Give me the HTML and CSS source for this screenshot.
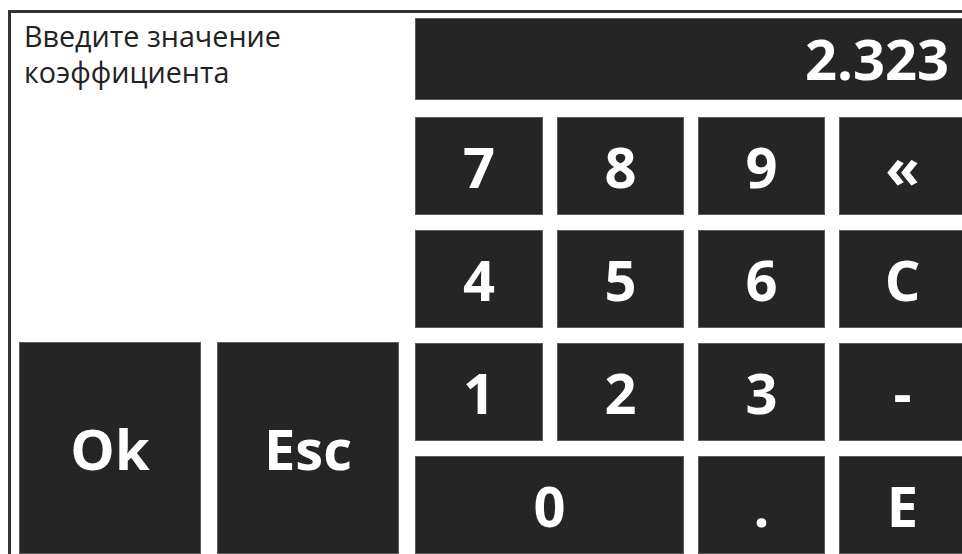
FILE: index.html
```html
<!DOCTYPE html>
<html lang="ru">
<head>
<meta charset="utf-8">
<title>Ввод коэффициента</title>
<link rel="stylesheet" href="styles.css">
</head>
<body>
<div class="frame">
  <div class="side">
    <p class="prompt">Введите значение<br>коэффициента</p>
    <div class="actions">
      <button class="key key-action">Ok</button>
      <button class="key key-action">Esc</button>
    </div>
  </div>
  <div class="entry">
    <div class="display">2.323</div>
    <div class="keypad">
      <button class="key">7</button>
      <button class="key">8</button>
      <button class="key">9</button>
      <button class="key">«</button>
      <button class="key">4</button>
      <button class="key">5</button>
      <button class="key">6</button>
      <button class="key">C</button>
      <button class="key">1</button>
      <button class="key">2</button>
      <button class="key">3</button>
      <button class="key">-</button>
      <button class="key key-wide">0</button>
      <button class="key">.</button>
      <button class="key">E</button>
    </div>
  </div>
</div>
</body>
</html>
```

FILE: styles.css
```css
html, body {
  margin: 0;
  padding: 0;
  background: #ffffff;
}

body {
  width: 962px;
  height: 554px;
  overflow: hidden;
  font-family: "Open Sans", "Noto Sans", sans-serif;
}

/* dialog frame: only its top and left edges fit on screen */
.frame {
  box-sizing: border-box;
  margin: 10px 0 0 8px;
  width: 980px;
  height: 560px;
  border-top: 3px solid #333333;
  border-left: 3px solid #333333;
  display: flex;
}

.side {
  width: 380px;
  padding-left: 8px;
  height: 541px;
  display: flex;
  flex-direction: column;
  justify-content: space-between;
}

.prompt {
  margin: 5px 0 0 5px;
  font-size: 28.7px;
  line-height: 36px;
  color: #222222;
}

.actions {
  display: flex;
  gap: 16px;
  height: 212px;
}

.key {
  box-sizing: border-box;
  margin: 0;
  padding: 0;
  border: 1px solid #5c5c5c;
  background: #252525;
  color: #ffffff;
  font-family: inherit;
  font-weight: 700;
  font-size: 56px;
  line-height: 1;
  display: flex;
  align-items: center;
  justify-content: center;
}

.key-action {
  width: 182px;
  height: 100%;
}

.entry {
  margin-left: 16px;
  padding-top: 5px;
  width: 551px;
}

.display {
  box-sizing: border-box;
  height: 82px;
  border: 1px solid #5c5c5c;
  background: #252525;
  color: #ffffff;
  font-weight: 700;
  font-size: 56px;
  line-height: 78px;
  text-align: right;
  padding-right: 16px;
  margin-bottom: 17px;
}

.keypad {
  display: grid;
  grid-template-columns: 128px 127px 127px 127px;
  grid-auto-rows: 98px;
  column-gap: 14px;
  row-gap: 15px;
}

.key-wide {
  grid-column: span 2;
}
```
